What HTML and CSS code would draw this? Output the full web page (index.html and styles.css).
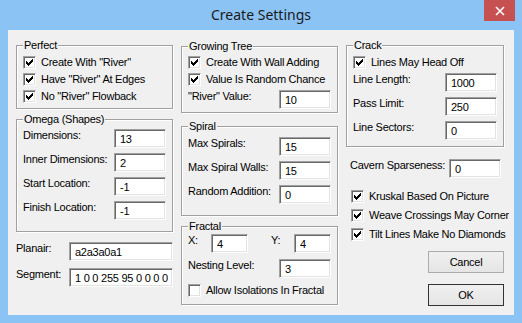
FILE: index.html
```html
<!DOCTYPE html>
<html lang="en">
<head>
    <meta charset="utf-8">
    <title>Create Settings</title>
    <link rel="stylesheet" href="styles.css">
</head>

<body>
    <div class="window">
        <header class="titlebar">
            <h1 class="title">Create Settings</h1>
            <button class="close" type="button" aria-label="Close">
                <svg width="10" height="10" viewBox="0 0 10 10"><path d="M1 1l8 8M9 1l-8 8" stroke="#fff" stroke-width="1.6"/></svg>
            </button>
        </header>
        <form class="client">
            <div class="col col-left">
                <fieldset class="group perfect">
                    <legend>Perfect</legend>
                    <label class="check"><span class="box"><svg width="11" height="11" viewBox="0 0 11 11"><path d="M2 4h1v3H2zM3 5h1v3H3zM4 6h1v3H4zM5 5h1v3H5zM6 4h1v3H6zM7 3h1v3H7zM8 2h1v3H8z"/></svg></span>Create With "River"</label>
                    <label class="check"><span class="box"><svg width="11" height="11" viewBox="0 0 11 11"><path d="M2 4h1v3H2zM3 5h1v3H3zM4 6h1v3H4zM5 5h1v3H5zM6 4h1v3H6zM7 3h1v3H7zM8 2h1v3H8z"/></svg></span>Have "River" At Edges</label>
                    <label class="check"><span class="box"><svg width="11" height="11" viewBox="0 0 11 11"><path d="M2 4h1v3H2zM3 5h1v3H3zM4 6h1v3H4zM5 5h1v3H5zM6 4h1v3H6zM7 3h1v3H7zM8 2h1v3H8z"/></svg></span>No "River" Flowback</label>
                </fieldset>
                <fieldset class="group omega">
                    <legend>Omega (Shapes)</legend>
                    <label class="field"><span>Dimensions:</span><input value="13"></label>
                    <label class="field"><span>Inner Dimensions:</span><input value="2"></label>
                    <label class="field"><span>Start Location:</span><input value="-1"></label>
                    <label class="field"><span>Finish Location:</span><input value="-1"></label>
                </fieldset>
                <label class="field wide planair"><span>Planair:</span><input value="a2a3a0a1"></label>
                <label class="field wide segment"><span>Segment:</span><input value="1 0 0 255 95 0 0 0 0"></label>
            </div>

            <div class="col col-mid">
                <fieldset class="group growing">
                    <legend>Growing Tree</legend>
                    <label class="check"><span class="box"><svg width="11" height="11" viewBox="0 0 11 11"><path d="M2 4h1v3H2zM3 5h1v3H3zM4 6h1v3H4zM5 5h1v3H5zM6 4h1v3H6zM7 3h1v3H7zM8 2h1v3H8z"/></svg></span>Create With Wall Adding</label>
                    <label class="check"><span class="box"><svg width="11" height="11" viewBox="0 0 11 11"><path d="M2 4h1v3H2zM3 5h1v3H3zM4 6h1v3H4zM5 5h1v3H5zM6 4h1v3H6zM7 3h1v3H7zM8 2h1v3H8z"/></svg></span>Value Is Random Chance</label>
                    <label class="field"><span>"River" Value:</span><input value="10"></label>
                </fieldset>
                <fieldset class="group spiral">
                    <legend>Spiral</legend>
                    <label class="field"><span>Max Spirals:</span><input value="15"></label>
                    <label class="field"><span>Max Spiral Walls:</span><input value="15"></label>
                    <label class="field"><span>Random Addition:</span><input value="0"></label>
                </fieldset>
                <fieldset class="group fractal">
                    <legend>Fractal</legend>
                    <div class="xy">
                        <label class="pair"><span class="axis">X:</span><input value="4"></label>
                        <label class="pair"><span class="axis">Y:</span><input value="4"></label>
                    </div>
                    <label class="field"><span>Nesting Level:</span><input value="3"></label>
                    <label class="check"><span class="box"></span>Allow Isolations In Fractal</label>
                </fieldset>
            </div>

            <div class="col col-right">
                <fieldset class="group crack">
                    <legend>Crack</legend>
                    <label class="check"><span class="box"><svg width="11" height="11" viewBox="0 0 11 11"><path d="M2 4h1v3H2zM3 5h1v3H3zM4 6h1v3H4zM5 5h1v3H5zM6 4h1v3H6zM7 3h1v3H7zM8 2h1v3H8z"/></svg></span>Lines May Head Off</label>
                    <label class="field"><span>Line Length:</span><input value="1000"></label>
                    <label class="field"><span>Pass Limit:</span><input value="250"></label>
                    <label class="field"><span>Line Sectors:</span><input value="0"></label>
                </fieldset>
                <label class="field cavern"><span>Cavern Sparseness:</span><input value="0"></label>
                <label class="check loose"><span class="box"><svg width="11" height="11" viewBox="0 0 11 11"><path d="M2 4h1v3H2zM3 5h1v3H3zM4 6h1v3H4zM5 5h1v3H5zM6 4h1v3H6zM7 3h1v3H7zM8 2h1v3H8z"/></svg></span>Kruskal Based On Picture</label>
                <label class="check loose"><span class="box"><svg width="11" height="11" viewBox="0 0 11 11"><path d="M2 4h1v3H2zM3 5h1v3H3zM4 6h1v3H4zM5 5h1v3H5zM6 4h1v3H6zM7 3h1v3H7zM8 2h1v3H8z"/></svg></span>Weave Crossings May Corner</label>
                <label class="check loose"><span class="box"><svg width="11" height="11" viewBox="0 0 11 11"><path d="M2 4h1v3H2zM3 5h1v3H3zM4 6h1v3H4zM5 5h1v3H5zM6 4h1v3H6zM7 3h1v3H7zM8 2h1v3H8z"/></svg></span>Tilt Lines Make No Diamonds</label>
                <button class="btn cancel" type="button">Cancel</button>
                <button class="btn ok" type="submit">OK</button>
            </div>
        </form>
    </div>
</body>
</html>
```

FILE: styles.css
```css
:root {
    box-sizing: border-box;
}
:root * {
    box-sizing: inherit;
}
body {
    background-color: #FFF;
    color: #000;
    font-family: "Liberation Sans", Arial, sans-serif;
    font-size: 11px;
    letter-spacing: -0.25px;
    line-height: 13px;
    margin: 0;
}
.window {
    background-color: #8BC3F4;
    display: flex;
    flex-direction: column;
    height: 323px;
    padding: 0 8px 8px;
    width: 522px;
}
.titlebar {
    display: grid;
    grid-template-columns: 1fr auto 1fr;
    height: 30px;
    margin: 0 -8px;
}
.title {
    color: #1A1A1A;
    font-family: "Noto Sans", sans-serif;
    font-size: 14px;
    font-weight: 400;
    grid-column: 2;
    letter-spacing: 0;
    line-height: 30px;
    margin: 0;
}
.close {
    align-items: center;
    align-self: start;
    background-color: #C75050;
    border: none;
    display: flex;
    grid-column: 3;
    height: 21px;
    justify-content: center;
    justify-self: end;
    margin: 0 7px 0 0;
    padding: 0;
    width: 31px;
}
.close svg {
    display: block;
}
.client {
    background-color: #F0F0F0;
    display: flex;
    flex: 1;
    gap: 8px;
    margin: 0;
    padding: 9px 0 0 8px;
    white-space: nowrap;
}
.col {
    display: flex;
    flex-direction: column;
    width: 157px;
}
.col-mid {
    padding-top: 1px;
}
.col-right {
    width: 158px;
}
.group {
    border: 1px solid #A0A0A0;
    box-shadow: inset 1px 1px #FFF, 1px 1px #FFF;
    display: flex;
    flex-direction: column;
    margin: 0;
    min-width: 0;
    padding: 0 6px;
}
legend {
    background-color: #F0F0F0;
    line-height: 13px;
    padding: 0 1px;
}
.check {
    align-items: center;
    display: flex;
    height: 17px;
}
.box {
    background-color: #FFF;
    border: 1px solid;
    border-color: #A0A0A0 #FFF #FFF #A0A0A0;
    box-shadow: inset 1px 1px #696969, inset -1px -1px #E3E3E3;
    flex: none;
    height: 13px;
    margin-right: 5px;
    width: 13px;
}
.box svg {
    display: block;
}
.field {
    align-items: flex-start;
    display: flex;
    justify-content: space-between;
    margin-top: 5px;
}
legend + .field {
    margin-top: 0;
}
.check + .field {
    margin-top: 2px;
}
input {
    background-color: #FFF;
    border: 1px solid;
    border-color: #A0A0A0 #FFF #FFF #A0A0A0;
    box-shadow: inset 1px 1px #696969, inset -1px -1px #E3E3E3;
    color: #000;
    flex: none;
    font: inherit;
    height: 19px;
    letter-spacing: inherit;
    margin: 0;
    outline: none;
    padding: 0 0 0 5px;
    width: 52px;
}
.perfect {
    padding-bottom: 3px;
    padding-top: 2px;
}
.omega {
    margin-top: 4px;
    padding-bottom: 11px;
    padding-top: 3px;
}
.wide input {
    width: 104px;
}
.planair {
    margin-top: 10px;
}
.segment {
    margin-top: 7px;
}
.growing {
    padding-bottom: 3px;
    padding-top: 1px;
}
.spiral {
    margin-top: 7px;
    padding-bottom: 11px;
    padding-top: 4px;
}
.fractal {
    margin-top: 4px;
    padding-bottom: 5px;
    padding-top: 1px;
}
.fractal .field {
    margin-top: 6px;
}
.fractal .check {
    margin-top: 4px;
}
.xy {
    display: flex;
    justify-content: space-between;
}
.pair {
    align-items: flex-start;
    display: flex;
}
.axis {
    width: 23px;
}
.pair input {
    width: 37px;
}
.crack {
    padding-bottom: 6px;
    padding-top: 2px;
}
.cavern {
    margin-top: 12px;
    padding: 0 3px 0 4px;
}
.check.loose {
    height: 19px;
    padding-left: 5px;
}
.cavern + .loose {
    margin-top: 9px;
}
.btn {
    align-self: flex-end;
    background: linear-gradient(#F0F0F0, #E5E5E5);
    border: 1px solid #ACACAC;
    color: #000;
    font: inherit;
    height: 22px;
    letter-spacing: inherit;
    padding: 0;
    width: 76px;
}
.cancel {
    margin-top: 7px;
}
.ok {
    border-color: #333;
    margin-top: 11px;
}
```
